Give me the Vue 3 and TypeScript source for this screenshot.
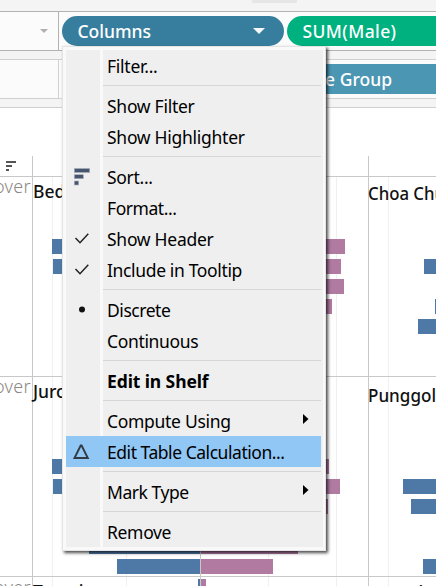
<script setup lang="ts">
type Icon = 'sort' | 'check' | 'dot' | 'delta'
interface Item {
  label: string
  icon?: Icon
  bold?: boolean
  submenu?: boolean
  active?: boolean
  spacing: number
}

const groups: Item[][] = [
  [{ label: 'Filter...', spacing: -0.25 }],
  [{ label: 'Show Filter', spacing: -0.27 }, { label: 'Show Highlighter', spacing: -0.27 }],
  [
    { label: 'Sort...', icon: 'sort', spacing: -0.3 },
    { label: 'Format...', spacing: -0.45 },
    { label: 'Show Header', icon: 'check', spacing: -0.27 },
    { label: 'Include in Tooltip', icon: 'check', spacing: -0.35 },
  ],
  [{ label: 'Discrete', icon: 'dot', spacing: -0.45 }, { label: 'Continuous', spacing: -0.35 }],
  [{ label: 'Edit in Shelf', bold: true, spacing: -0.1 }],
  [
    { label: 'Compute Using', submenu: true, spacing: -0.3 },
    { label: 'Edit Table Calculation...', icon: 'delta', active: true, spacing: -0.46 },
  ],
  [{ label: 'Mark Type', submenu: true, spacing: -0.45 }],
  [{ label: 'Remove', spacing: -0.33 }],
]

// [x, y, width] of each bar in the population chart
const male: number[][] = [
  [52, 239, 148], [53, 259, 147], [52, 459, 148], [53, 479, 147],
  [89, 539, 111], [117, 559, 83], [198, 579, 2],
  [424, 259, 12], [435, 299, 1], [418, 319, 18],
  [403, 479, 33], [411, 499, 25], [423, 559, 13],
]
const female: number[][] = [
  [201, 239, 144], [201, 259, 140], [201, 279, 143], [201, 299, 131],
  [201, 459, 128], [201, 479, 139], [201, 499, 127],
  [201, 539, 97], [201, 559, 72], [201, 579, 5],
]
</script>

<template>
  <div class="window">
    <div class="toolbar"><span class="tab"></span></div>
    <div class="shelf columns">
      <div class="shelf-name"><span class="caret"></span></div>
      <div class="pills">
        <div class="pill blue"><span>Columns</span><i class="caret light"></i></div>
        <div class="pill green"><span>SUM(Male)</span></div>
      </div>
    </div>
    <div class="shelf rows">
      <div class="shelf-name"></div>
      <div class="pills">
        <div class="pill teal"><span>Age Group</span></div>
      </div>
    </div>
    <svg class="chart" width="436" height="478" viewBox="0 108 436 478">
      <g fill="#f0f0f0">
        <rect v-for="x in [52, 126, 268, 336, 388]" :key="x" :x="x" y="177" width="1" height="409" />
      </g>
      <rect v-for="(b, i) in male" :key="'m' + i" :x="b[0]" :y="b[1]" :width="b[2]" height="15" fill="#4e79a7" />
      <rect v-for="(b, i) in female" :key="'f' + i" :x="b[0]" :y="b[1]" :width="b[2]" height="15" fill="#b07aa1" />
      <g fill="#c8c8c8">
        <rect v-for="y in [176, 376, 576]" :key="y" x="0" :y="y" width="436" height="1" />
        <rect x="32" y="156" width="1" height="430" />
        <rect x="200" y="177" width="1" height="409" />
        <rect x="368" y="156" width="1" height="430" />
      </g>
      <path d="M6 161h10v2H6zM6 165h6v2H6zM6 169h3v2H6z" fill="#555" />
      <g class="hint">
        <text x="-6" y="193" textLength="36.500">over</text>
        <text x="-6" y="393" textLength="36.500">over</text>
        <text x="-6" y="594" textLength="36.500">over</text>
      </g>
      <g class="area">
        <text x="33" y="198">Bedok</text>
        <text x="33" y="398">Jurong</text>
        <text x="33" y="598">Tampines</text>
        <text x="368" y="199.500" textLength="77" lengthAdjust="spacingAndGlyphs">Choa Chu</text>
        <text x="368" y="402" textLength="68" lengthAdjust="spacingAndGlyphs">Punggol</text>
        <text x="368" y="599">Tengah</text>
      </g>
    </svg>

    <div class="menu">
      <div v-for="(g, gi) in groups" :key="gi" class="group">
        <div v-for="it in g" :key="it.label" class="item" :class="{ active: it.active, bold: it.bold }">
          <div class="gutter">
            <svg v-if="it.icon" width="34" height="31" viewBox="0 0 34 31">
              <g v-if="it.icon === 'sort'" fill="#46566e" stroke="#a9b0bc" stroke-width=".6">
                <rect x="8.300" y="7.500" width="15.400" height="4" />
                <rect x="8.300" y="13.700" width="9" height="4" />
                <rect x="8.300" y="20" width="4.400" height="4" />
              </g>
              <path v-else-if="it.icon === 'check'" d="M9.500 15l4.500 4.700L22.300 10.700" fill="none" stroke="#222" stroke-width="1.500" />
              <circle v-else-if="it.icon === 'dot'" cx="16" cy="15.500" r="3" fill="#111" />
              <path v-else d="M14.700 9.500L8.500 22H21.800L15.600 9.500z" fill="none" stroke="#333b44" stroke-width="1.900" />
            </svg>
          </div>
          <div class="label">
            <span :style="{ letterSpacing: it.spacing + 'px' }">{{ it.label }}</span>
            <svg v-if="it.submenu" class="arrow" width="6" height="10" viewBox="0 0 6 10"><path d="M0 0L5.500 5L0 10z" /></svg>
          </div>
        </div>
      </div>
    </div>
  </div>
</template>

<style>
body { margin: 0; overflow: hidden; }
</style>

<style scoped>
.window {
  position: relative;
  width: 436px;
  height: 586px;
  overflow: hidden;
  background: #f4f4f4;
  font-family: "Noto Sans", sans-serif;
}
.toolbar { height: 11px; }
.tab { display: block; width: 45px; height: 3px; margin-left: 252px; background: #e6e6e6; }
.shelf { display: flex; box-sizing: border-box; height: 40px; background: #fbfbfb; }
.shelf.columns { border-top: 1px solid #b2b2b2; border-bottom: 1px solid #b2b2b2; }
.shelf.rows { margin-top: 8px; border-top: 1px solid #d0d0d0; border-bottom: 1px solid #d0d0d0; }
.shelf-name {
  display: flex;
  align-items: center;
  justify-content: flex-end;
  box-sizing: border-box;
  width: 59px;
  padding-right: 10px;
  border-right: 1px solid #b2b2b2;
}
.rows .shelf-name { border-right-color: #d0d0d0; }
.caret { border: 4px solid transparent; border-top-color: #b0b0b0; border-bottom: 0; }
.caret.light { border-width: 6px 6px 0; border-top-color: #f4f8fa; }
.pills { display: flex; flex: 1; gap: 3px; padding: 4px 0 4px 3px; overflow: hidden; }
.pill {
  display: flex;
  flex: none;
  align-items: center;
  box-sizing: border-box;
  height: 30px;
  border-radius: 15px;
  color: #fff;
  font-size: 17.500px;
  font-weight: 500;
}
.blue { justify-content: space-between; width: 222px; padding: 0 19px 0 15.500px; background: #377e9e; }
.green { width: 200px; padding-left: 15.500px; background: #00b180; letter-spacing: .4px; }
.teal { justify-content: flex-end; width: 400px; padding-right: 70px; background: #4a96b3; }
.chart { display: block; box-sizing: border-box; margin-top: 9px; background: #fff; outline: 1px solid #d0d0d0; }
.hint text { fill: #8b8782; font-size: 18px; font-weight: 350; }
.area text { fill: #111; font-size: 17.500px; font-weight: 500; }
.menu {
  position: absolute;
  left: 62px;
  top: 46px;
  box-sizing: border-box;
  width: 264px;
  padding: 3px;
  border: 1px solid #e4e4e4;
  background: linear-gradient(90deg, #efefef 34px, #f9f9f9 34px 37px, #efefef 37px 257px) no-repeat 3px 3px / 257px calc(100% - 6px), #f9f9f9;
  box-shadow: 2px 2px 3px rgba(0, 0, 0, .7);
}
.group + .group::before {
  content: "";
  display: block;
  height: 1px;
  margin: 4px 1px 4px 37px;
  background: #d6d6d6;
}
.item { display: flex; height: 31px; margin-right: 1px; }
.item.active { background: #91c7f5; }
.gutter { width: 34px; height: 31px; }
.label {
  display: flex;
  flex: 1;
  align-items: center;
  justify-content: space-between;
  padding: 2px 12px 0 7px;
  color: #000;
  font-size: 17.500px;
  line-height: 29px;
  white-space: nowrap;
}
.bold .label { font-weight: 700; }
.arrow { margin-top: -5px; }
</style>
